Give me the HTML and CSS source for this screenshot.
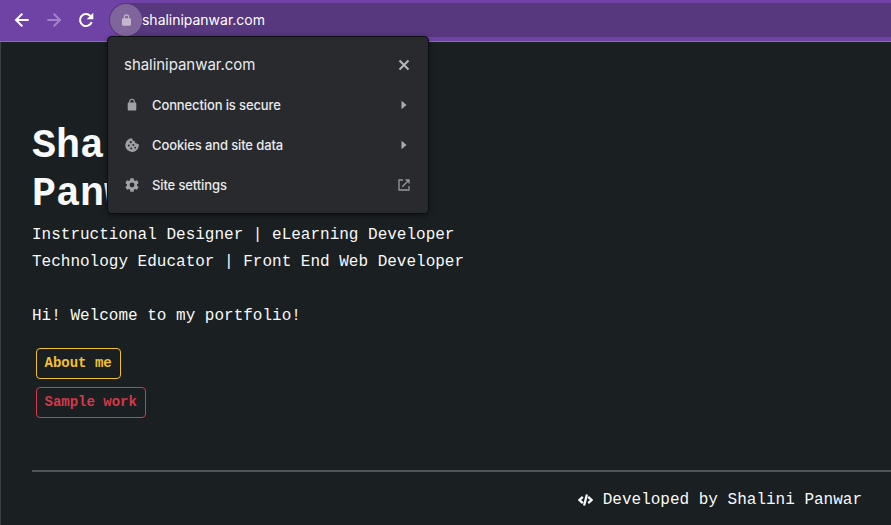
FILE: index.html
```html
<!DOCTYPE html>
<html lang="en">
<head>
<meta charset="utf-8">
<title>Shalini Panwar</title>
<link rel="stylesheet" href="styles.css">
</head>
<body>
<header class="toolbar">
  <nav class="nav">
    <svg viewBox="0 0 24 24" class="nav-icon"><path d="M22 12H3M12.500 2.500 3 12l9.500 9.500"/></svg>
    <svg viewBox="0 0 24 24" class="nav-icon disabled"><path d="M2 12h19M11.500 2.500 21 12l-9.500 9.500"/></svg>
    <svg viewBox="0 0 24 24" class="nav-icon"><path d="M20.500 15.200A9 9 0 1 1 18.500 5.800l2 2"/><path class="solid" d="M23 1v10H13z"/></svg>
  </nav>
  <div class="address">
    <span class="site-button"><svg viewBox="0 0 10 13" class="lock"><path fill-rule="evenodd" d="M2 4.500V3.200a3 3 0 0 1 6 0v1.300h.5Q10 4.500 10 6v5.500Q10 13 8.500 13h-7Q0 13 0 11.500V6q0-1.500 1.500-1.500zm1.200 0h3.600V3.200a1.800 1.800 0 0 0-3.600 0z"/></svg></span>
    <span class="url">shalinipanwar.com</span>
  </div>
</header>
<main class="page">
  <h1>Shalini<br>Panwar</h1>
  <p class="lead">Instructional Designer | eLearning Developer<br>Technology Educator | Front End Web Developer</p>
  <p class="welcome">Hi! Welcome to my portfolio!</p>
  <div class="actions">
    <a class="btn yellow">About me</a>
    <a class="btn red">Sample work</a>
  </div>
  <footer>
    <svg viewBox="0 0 15 12" class="code"><path d="M4.800 2.800 1.500 6l3.300 3.200M10.200 2.800 13.500 6l-3.300 3.200M8.900.5 6.100 11.500"/></svg>
    <span>Developed by Shalini Panwar</span>
  </footer>
</main>
<section class="popup">
  <div class="row title"><span class="label">shalinipanwar.com</span><svg viewBox="0 0 14 14" class="end"><path class="cross" d="m2.500 2.500 9 9m0-9-9 9"/></svg></div>
  <div class="row">
    <svg viewBox="0 0 14 14" class="start"><path fill-rule="evenodd" d="M4.200 4.500V3.500a2.800 2.800 0 0 1 5.600 0v1h.6q.9 0 .9.900v6.200q0 .9-.9.900H3.600q-.9 0-.9-.9V5.400q0-.9.9-.9zm1.100 0h3.400V3.500a1.700 1.700 0 0 0-3.400 0z"/></svg>
    <span class="label">Connection is secure</span>
    <svg viewBox="0 0 14 14" class="end"><path d="m4.500 2.800 5 4.200-5 4.200z"/></svg>
  </div>
  <div class="row">
    <svg viewBox="0 0 14 14" class="start"><path d="M7.300.3a2.500 2.500 0 0 0 2.500 2.900 2.100 2.100 0 0 0 2.100 2.300q.8.900 1.900.8A6.800 6.800 0 1 1 7.300.3z"/><g class="holes"><circle cx="5.800" cy="4.200" r="1.100"/><circle cx="3.800" cy="7.500" r="1"/><circle cx="8.300" cy="7" r="1"/><circle cx="6.200" cy="10.600" r="1"/><circle cx="10.300" cy="9.700" r=".9"/></g></svg>
    <span class="label">Cookies and site data</span>
    <svg viewBox="0 0 14 14" class="end"><path d="m4.500 2.800 5 4.200-5 4.200z"/></svg>
  </div>
  <div class="row">
    <svg viewBox="2 2 20 20" class="start"><path d="M19.140 12.940c.04-.3.060-.61.060-.94s-.02-.64-.07-.94l2.030-1.580a.49.49 0 0 0 .12-.61l-1.920-3.320a.49.49 0 0 0-.59-.22l-2.390.96a7 7 0 0 0-1.620-.94l-.36-2.540A.48.48 0 0 0 13.920 2.400h-3.840a.47.47 0 0 0-.47.410l-.36 2.540c-.59.240-1.130.57-1.620.94l-2.390-.96a.47.47 0 0 0-.59.220L2.740 8.870a.47.47 0 0 0 .12.610l2.030 1.580a6 6 0 0 0-.02 1.880l-2.030 1.580a.49.49 0 0 0-.12.610l1.920 3.320c.12.220.37.290.59.220l2.390-.96c.5.380 1.030.7 1.620.94l.36 2.540c.05.240.24.410.48.410h3.840c.24 0 .44-.17.47-.41l.36-2.540a7 7 0 0 0 1.620-.94l2.390.96c.22.080.47 0 .59-.22l1.920-3.320a.47.47 0 0 0-.12-.61zM12 15.400a3.400 3.400 0 1 1 0-6.800 3.400 3.400 0 0 1 0 6.800z"/></svg>
    <span class="label">Site settings</span>
    <svg viewBox="0 0 14 14" class="end"><path class="external" d="M6 2H2v10h10V8M8.500 2H12v3.500M12 2 5.200 8.800"/></svg>
  </div>
</section>
</body>
</html>
```
FILE: styles.css
```css
* { box-sizing: border-box; }
body {
  margin: 0;
  height: 525px;
  overflow: hidden;
  background: #1a1f21;
  color: #f8f9fa;
  font: 16px/27px "Liberation Mono", "Courier New", monospace;
}
svg { display: block; flex: none; }
.toolbar {
  display: flex;
  height: 42px;
  padding: 3px 0 4px 14px;
  background: #6f42a5;
  border-bottom: 1px solid #8c70ac;
  font-family: Inter, sans-serif;
}
.nav { display: flex; gap: 16px; width: 95px; height: 34px; align-items: center; }
.nav-icon { width: 16px; height: 16px; fill: none; stroke: #fff; stroke-width: 3; }
.nav-icon .solid { fill: #fff; stroke: none; }
.disabled { stroke: #a583ca; }
.address {
  flex: 1;
  display: flex;
  align-items: center;
  height: 34px;
  border-radius: 17px 0 0 17px;
  background: #57377d;
}
.site-button {
  display: grid;
  place-items: center;
  width: 32px;
  height: 32px;
  margin-left: 1px;
  border-radius: 50%;
  background: #80659d;
}
.lock { width: 9px; height: 12px; fill: #c3b7cf; }
.url { margin-top: -1px; font-size: 14px; color: #fff; letter-spacing: -.02px; }
.page {
  height: 483px;
  padding: 81px 0 0 31px;
  border-left: 1px solid #3b4042;
}
h1 { margin: 0; font-size: 40px; line-height: 48px; font-weight: 700; }
.lead { margin: 3px 0 27px; }
.welcome { margin: 0; }
.actions {
  display: flex;
  flex-direction: column;
  align-items: flex-start;
  gap: 8px;
  margin: 18px 0 0 4px;
}
.btn {
  padding: 4px 7.500px;
  width: 85px;
  height: 31px;
  border: 1px solid;
  border-radius: 4px;
  font-size: 14px;
  line-height: 21px;
  font-weight: 700;
}
.yellow { color: #f2c12e; }
.red { width: 110px; color: #d33a4b; }
footer {
  display: flex;
  justify-content: flex-end;
  align-items: center;
  gap: 10px;
  margin-top: 52px;
  padding: 15px 29px 0 0;
  border-top: 2px solid #505456;
}
.code { width: 15px; height: 12px; margin-top: -2px; fill: none; stroke: #f8f9fa; stroke-width: 2.300; }
.popup {
  position: absolute;
  left: 108px;
  top: 37px;
  width: 320px;
  height: 176px;
  padding: 8px 17px 8px 16px;
  border-radius: 4px;
  background: #292a2d;
  box-shadow: 0 0 0 1px #0c0e10, 0 2px 6px #0008;
  color: #e8eaed;
  font: 500 13px/20px Inter, sans-serif;
}
.row { display: flex; align-items: center; height: 40px; }
.label { flex: 1; letter-spacing: -.12px; }
.title { font-size: 15px; font-weight: 400; }
.title .label { letter-spacing: -.04px; }
.start, .end { width: 14px; height: 14px; fill: #a9abae; }
.start { margin: 0 13px 0 1px; fill: #a0a1a4; }
.holes { fill: #292a2d; }
.cross { stroke: #b5b7ba; stroke-width: 2; }
.external { fill: none; stroke: #96989b; stroke-width: 1.3; }
```
